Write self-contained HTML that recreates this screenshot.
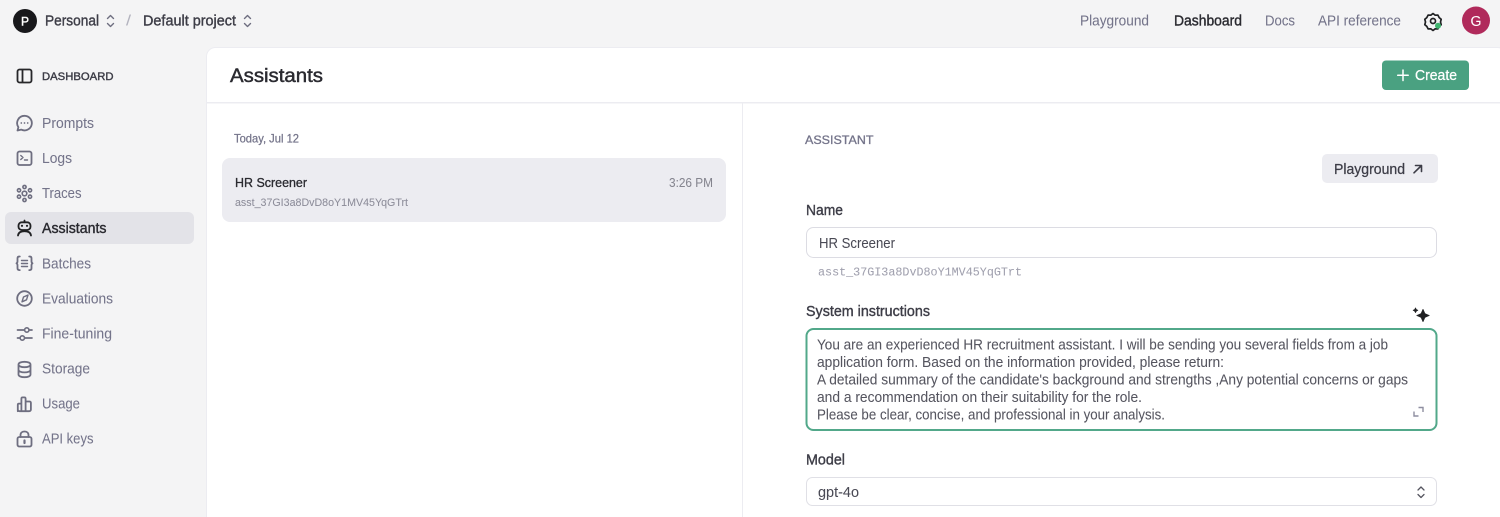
<!DOCTYPE html>
<html><head><meta charset="utf-8"><style>
html,body{margin:0;padding:0;width:1500px;height:517px;overflow:hidden;background:#f4f4f5}
svg{display:block;filter:blur(.35px)}
text{font-family:"Liberation Sans",sans-serif;font-size:14.5px;white-space:pre;stroke:currentColor;stroke-width:.05px}
.m{stroke:currentColor;stroke-width:.38px}
.ic{fill:none;stroke:#6e6e80;stroke-width:1.8;stroke-linecap:round;stroke-linejoin:round}
.g{fill:#74748a;color:#74748a}
.d{fill:#3d3d47;color:#3d3d47}
.s{fill:none;stroke:#6e6e80;stroke-width:1.4;stroke-linecap:round;stroke-linejoin:round}
</style></head><body>
<svg width="1500" height="517" viewBox="0 0 1500 517" xmlns="http://www.w3.org/2000/svg">
<rect width="1500" height="517" fill="#f4f4f5"/>
<rect x="206.500" y="47.500" width="1300" height="480" rx="9" fill="#fff" stroke="#ececf1"/>
<rect x="207" y="102" width="1293" height="1.500" fill="#ececf1"/>
<rect x="742" y="103" width="1" height="414" fill="#ececf1"/>

<!-- top bar -->
<circle cx="25" cy="21" r="12" fill="#18181b"/>
<text x="21" y="25.500" fill="#fff" color="#fff" class="m" style="font-size:12px;stroke-width:.4px" textLength="8" lengthAdjust="spacingAndGlyphs">P</text>
<text x="45" y="25.500" class="d m" textLength="54" lengthAdjust="spacingAndGlyphs">Personal</text>
<path class="s" d="M107.500 18.500l3-3 3 3M107.500 23.500l3 3 3-3"/>
<text x="126" y="25.500" fill="#b4b4bf" color="#b4b4bf" textLength="5" lengthAdjust="spacingAndGlyphs">/</text>
<text x="143" y="25.500" class="d m" textLength="93" lengthAdjust="spacingAndGlyphs">Default project</text>
<path class="s" d="M244.500 18.500l3-3 3 3M244.500 23.500l3 3 3-3"/>

<text x="1080" y="25.500" class="g" textLength="69" lengthAdjust="spacingAndGlyphs">Playground</text>
<text x="1174" y="25.500" fill="#2a2a30" color="#2a2a30" class="m" textLength="68" lengthAdjust="spacingAndGlyphs">Dashboard</text>
<text x="1265" y="25.500" class="g" textLength="30" lengthAdjust="spacingAndGlyphs">Docs</text>
<text x="1318" y="25.500" class="g" textLength="83" lengthAdjust="spacingAndGlyphs">API reference</text>
<path fill="none" stroke="#202123" stroke-width="1.700" stroke-linejoin="round" d="M1433 13.500l2.200 1.700 2.700-.1 1.300 2.500 2 1.700-.7 2.700.7 2.700-2 1.700-1.300 2.500-2.700-.1-2.200 1.700-2.200-1.700-2.700.1-1.300-2.500-2-1.700.7-2.700-.7-2.700 2-1.700 1.300-2.500 2.700.1z"/>
<circle cx="1433" cy="21" r="2.500" fill="none" stroke="#202123" stroke-width="1.700"/>
<circle cx="1438" cy="25.800" r="3" fill="#3fb56f"/>
<circle cx="1476" cy="20.500" r="14" fill="#b02a5b"/>
<text x="1470.500" y="26" fill="#fff" color="#fff" style="font-size:15px" textLength="11" lengthAdjust="spacingAndGlyphs">G</text>

<!-- sidebar -->
<rect x="17.500" y="69.500" width="14" height="13" rx="2" fill="none" stroke="#27272a" stroke-width="1.800"/>
<path d="M22.500 69.500v13" stroke="#27272a" stroke-width="1.800"/>
<text x="42" y="80" fill="#3d3d47" color="#3d3d47" class="m" style="font-size:11px;stroke-width:.4px" textLength="71.500" lengthAdjust="spacingAndGlyphs">DASHBOARD</text>

<rect x="5" y="212" width="189" height="32" rx="6" fill="#e3e3e8"/>

<path class="ic" d="M24.500 115.800a7.300 7.300 0 1 1-3.300 13.800l-3.700.9.900-3.300a7.300 7.300 0 0 1 6.100-11.400z"/>
<path d="M21.300 123h.01M24.500 123h.01M27.700 123h.01" stroke="#6e6e80" stroke-width="1.700" stroke-linecap="round"/>
<text x="42" y="128" class="g" textLength="52" lengthAdjust="spacingAndGlyphs">Prompts</text>

<rect class="ic" x="17.500" y="151.500" width="14" height="13.500" rx="2"/>
<path class="s" d="M20.800 155.500l2.200 2-2.200 2M24.500 160h3"/>
<text x="42" y="163" class="g" textLength="30" lengthAdjust="spacingAndGlyphs">Logs</text>

<g fill="none" stroke="#6e6e80" stroke-width="1.600">
<circle cx="24.500" cy="193.500" r="2.300"/><circle cx="24.500" cy="187" r="1.600"/><circle cx="24.500" cy="200" r="1.600"/>
<circle cx="19" cy="190.300" r="1.600"/><circle cx="30" cy="190.300" r="1.600"/><circle cx="19" cy="196.700" r="1.600"/><circle cx="30" cy="196.700" r="1.600"/></g>
<text x="42" y="198" class="g" textLength="39.500" lengthAdjust="spacingAndGlyphs">Traces</text>

<g fill="none" stroke="#202123" stroke-width="1.800" stroke-linecap="round" stroke-linejoin="round">
<path d="M24.500 220.500v1.700"/><rect x="18.500" y="222.300" width="12" height="7.700" rx="3.300"/><path d="M18 235.500c.4-3 3-4.300 6.500-4.300s6.100 1.300 6.500 4.300"/></g>
<path d="M22 225.800h.01M27 225.800h.01" stroke="#202123" stroke-width="2.200" stroke-linecap="round"/>
<text x="42" y="233" fill="#2a2a30" color="#2a2a30" class="m" textLength="64.500" lengthAdjust="spacingAndGlyphs">Assistants</text>

<path class="ic" d="M19.800 256.500h-.5c-1.200 0-1.800.7-1.800 1.800v3c0 1-.4 1.700-1 2 .6.300 1 1 1 2v3c0 1.100.6 1.800 1.800 1.800h.5M29.200 256.500h.5c1.200 0 1.800.7 1.800 1.800v3c0 1 .4 1.700 1 2-.6.300-1 1-1 2v3c0 1.100-.6 1.800-1.800 1.800h-.5"/>
<path class="s" d="M21.500 260.500h6M21.500 263.500h6M21.500 266.500h6"/>
<text x="42" y="268.500" class="g" textLength="49" lengthAdjust="spacingAndGlyphs">Batches</text>

<circle class="ic" cx="24.500" cy="298.500" r="7.300"/>
<path class="s" d="M28 295l-1.500 4.800-4.500 2 1.500-4.800z"/>
<text x="42" y="303.500" class="g" textLength="71" lengthAdjust="spacingAndGlyphs">Evaluations</text>

<path class="s" style="stroke-width:1.700" d="M17.500 330h7M29 330h3M17.500 338h2.500M25 338h7"/>
<circle class="s" style="stroke-width:1.600" cx="26.800" cy="330" r="2.200"/><circle class="s" style="stroke-width:1.600" cx="22.300" cy="338" r="2.200"/>
<text x="42" y="338.500" class="g" textLength="70" lengthAdjust="spacingAndGlyphs">Fine-tuning</text>

<path class="ic" d="M18.500 364.500c0-1.700 2.700-2.700 6-2.700s6 1 6 2.700v10c0 1.700-2.700 2.700-6 2.700s-6-1-6-2.700zM18.500 364.500c0 1.700 2.700 2.700 6 2.700s6-1 6-2.700M18.500 369.700c0 1.700 2.700 2.700 6 2.700s6-1 6-2.700"/>
<text x="42" y="373.500" class="g" textLength="48" lengthAdjust="spacingAndGlyphs">Storage</text>

<path class="ic" d="M17.800 411.200v-6.400c0-.7.500-1.200 1.100-1.200h2.500M21.400 411.200v-12.500c0-.8.500-1.300 1.200-1.300h1.800c.7 0 1.200.5 1.200 1.300v12.500M25.600 401.500h3.800c.9 0 1.500.6 1.500 1.500v6.500c0 1-.7 1.700-1.700 1.700H19.500c-1 0-1.700-.7-1.700-1.700"/>
<text x="42" y="408.500" class="g" textLength="38" lengthAdjust="spacingAndGlyphs">Usage</text>

<rect class="ic" x="17.500" y="437" width="14" height="9.500" rx="1.800"/>
<path class="ic" d="M20.500 437v-2c0-2.200 1.800-3.500 4-3.500s4 1.300 4 3.500v2"/>
<path d="M24.500 440.500v2.500" stroke="#6e6e80" stroke-width="2.200" stroke-linecap="round"/>
<text x="42" y="443.500" class="g" textLength="51.500" lengthAdjust="spacingAndGlyphs">API keys</text>

<!-- header -->
<text x="230" y="82" fill="#2a2a30" color="#2a2a30" class="m" style="font-size:19px;stroke-width:.45px" textLength="93" lengthAdjust="spacingAndGlyphs">Assistants</text>
<rect x="1382" y="60.500" width="87" height="29.500" rx="4" fill="#4aa181"/>
<path d="M1403 70v10.500M1397.700 75.200h10.500" stroke="#fff" stroke-width="1.500" stroke-linecap="round"/>
<text x="1415" y="80" fill="#fff" color="#fff" class="m" style="stroke-width:.25px" textLength="42" lengthAdjust="spacingAndGlyphs">Create</text>

<!-- list -->
<text x="234" y="142.500" fill="#74748a" color="#74748a" class="m" style="font-size:12px;stroke-width:.25px" textLength="65" lengthAdjust="spacingAndGlyphs">Today, Jul 12</text>
<rect x="222" y="158" width="504" height="64" rx="8" fill="#ececf1"/>
<text x="235" y="187" fill="#2a2a30" color="#2a2a30" class="m" style="font-size:13px;stroke-width:.3px" textLength="72" lengthAdjust="spacingAndGlyphs">HR Screener</text>
<text x="669" y="187" fill="#85858f" color="#85858f" style="font-size:13px" textLength="44" lengthAdjust="spacingAndGlyphs">3:26 PM</text>
<text x="235" y="206" fill="#8c8c99" color="#8c8c99" style="font-size:11px" textLength="173" lengthAdjust="spacingAndGlyphs">asst_37GI3a8DvD8oY1MV45YqGTrt</text>

<!-- detail -->
<text x="805" y="144" fill="#74748a" color="#74748a" class="m" style="font-size:11.500px;stroke-width:.3px" textLength="68.500" lengthAdjust="spacingAndGlyphs">ASSISTANT</text>
<rect x="1322" y="154" width="116" height="29" rx="5" fill="#ececf1"/>
<text x="1334" y="174" class="d m" style="stroke-width:.25px" textLength="71" lengthAdjust="spacingAndGlyphs">Playground</text>
<path d="M1414 172.800l7.500-7.300M1415.500 165.500h6v6" fill="none" stroke="#3d3d47" stroke-width="1.600" stroke-linecap="round" stroke-linejoin="round"/>

<text x="806" y="215" class="d m" textLength="37" lengthAdjust="spacingAndGlyphs">Name</text>
<rect x="806.500" y="227.500" width="630" height="30" rx="7" fill="#fff" stroke="#dcdce3"/>
<text x="819" y="248" fill="#4a4a55" color="#4a4a55" textLength="76" lengthAdjust="spacingAndGlyphs">HR Screener</text>
<text x="818" y="275.500" fill="#a0a0ae" color="#a0a0ae" style="font-family:'Liberation Mono',monospace;font-size:12px" textLength="204" lengthAdjust="spacingAndGlyphs">asst_37GI3a8DvD8oY1MV45YqGTrt</text>

<text x="806" y="316" class="d m" textLength="124" lengthAdjust="spacingAndGlyphs">System instructions</text>
<path d="M1423 309l2 4.500 4.500 2-4.500 2-2 4.500-2-4.500-4.500-2 4.500-2zM1415.500 307.700l.9 1.700 1.700.9-1.700.9-.9 1.700-.9-1.700-1.700-.9 1.700-.9z" fill="#202123" stroke="#202123" stroke-width=".5" stroke-linejoin="round"/>
<rect x="806.500" y="329" width="630" height="101" rx="7" fill="#fff" stroke="#52a88a" stroke-width="2"/>
<g fill="#55555f" color="#55555f">
<text x="817" y="349.500" textLength="571" lengthAdjust="spacingAndGlyphs">You are an experienced HR recruitment assistant. I will be sending you several fields from a job</text>
<text x="817" y="367" textLength="407" lengthAdjust="spacingAndGlyphs">application form. Based on the information provided, please return:</text>
<text x="817" y="384.500" textLength="591" lengthAdjust="spacingAndGlyphs">A detailed summary of the candidate's background and strengths ,Any potential concerns or gaps</text>
<text x="817" y="402" textLength="325" lengthAdjust="spacingAndGlyphs">and a recommendation on their suitability for the role.</text>
<text x="817" y="419.500" textLength="348" lengthAdjust="spacingAndGlyphs">Please be clear, concise, and professional in your analysis.</text>
</g>
<path d="M1414 411.500v4.500h4.500M1418.500 407.500h4.500v4.500" fill="none" stroke="#8e8ea0" stroke-width="1.400"/>

<text x="806" y="464.500" class="d m" textLength="39" lengthAdjust="spacingAndGlyphs">Model</text>
<rect x="806.500" y="477.500" width="630" height="28" rx="6" fill="#fff" stroke="#e0e0e6"/>
<text x="818" y="497" fill="#4a4a55" color="#4a4a55" textLength="41" lengthAdjust="spacingAndGlyphs">gpt-4o</text>
<path d="M1418 490l3-3 3 3M1418 494.500l3 3 3-3" fill="none" stroke="#55555f" stroke-width="1.300" stroke-linecap="round" stroke-linejoin="round"/>
</svg>
</body></html>
